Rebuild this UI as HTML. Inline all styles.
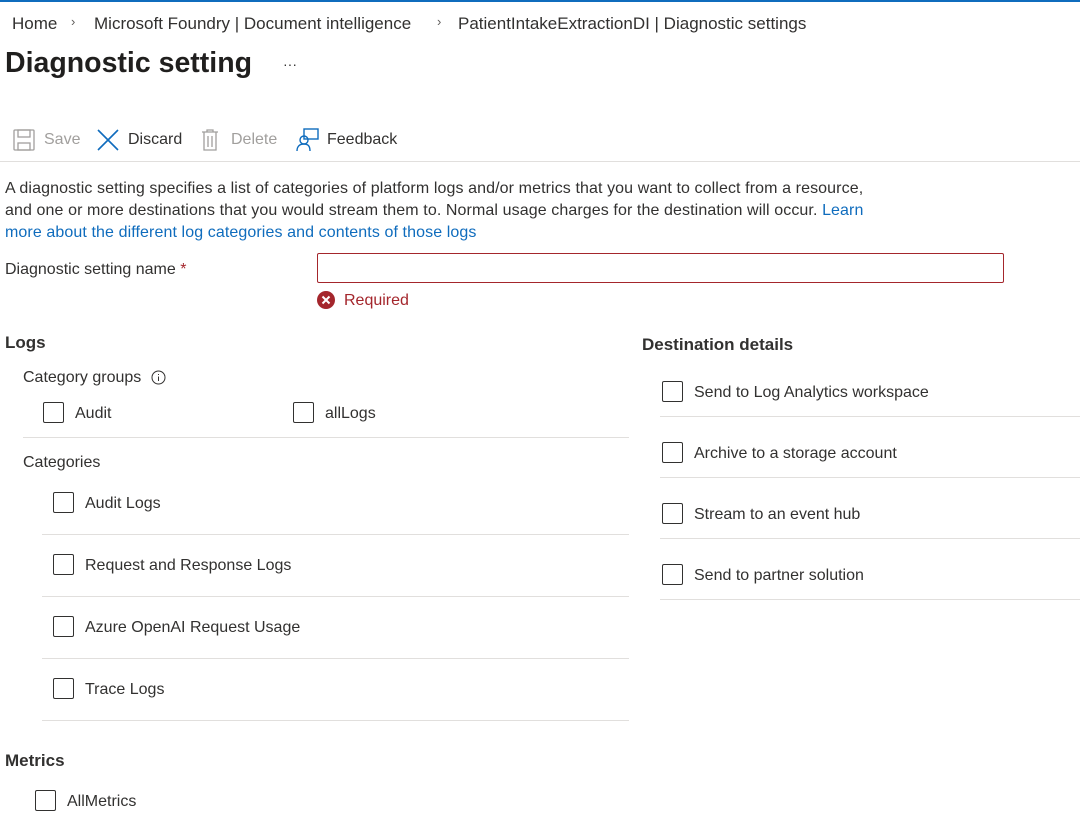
<!DOCTYPE html>
<html><head><meta charset="utf-8"><style>
*{margin:0;padding:0;box-sizing:border-box}
body{width:1080px;height:818px;overflow:hidden;background:#fff;font-family:"Liberation Sans",sans-serif;color:#323130;font-size:16px;position:relative}
.a{position:absolute;white-space:nowrap}
.cb{position:absolute;width:21px;height:21px;border:1px solid #323130;border-radius:2px;background:#fff}
.hr{position:absolute;height:1px;background:#e1dfdd}
.lnk{color:#0f6cbd}
</style></head><body>
<div class="a" style="left:0;top:0;width:1080px;height:2px;background:#0f6cbd"></div>
<div class="a" style="left:12px;top:14px;font-size:17px">Home</div>
<div class="a" style="left:71px;top:14px;font-size:13px;color:#605e5c">›</div>
<div class="a" style="left:94px;top:14px;font-size:17px">Microsoft Foundry | Document intelligence</div>
<div class="a" style="left:437px;top:14px;font-size:13px;color:#605e5c">›</div>
<div class="a" style="left:458px;top:14px;font-size:17px">PatientIntakeExtractionDI | Diagnostic settings</div>
<div class="a" style="left:5px;top:47px;font-size:28.5px;font-weight:bold;color:#201f1e">Diagnostic setting</div>
<div class="a" style="left:283px;top:56px;font-size:14px">···</div>
<svg class="a" style="left:13px;top:129px" width="22" height="22" viewBox="0 0 22 22" fill="none" stroke="#a19f9d" stroke-width="1.3"><rect x="1" y="1" width="20" height="20" rx="1"/><rect x="5" y="1" width="12" height="7"/><rect x="5" y="14" width="12" height="7"/></svg>
<div class="a" style="left:44px;top:131px;color:#a19f9d">Save</div>
<svg class="a" style="left:97px;top:129px" width="22" height="22" viewBox="0 0 22 22" stroke="#0f6cbd" stroke-width="1.6"><path d="M1 1L21 21M21 1L1 21"/></svg>
<div class="a" style="left:128px;top:131px">Discard</div>
<svg class="a" style="left:201px;top:129px" width="18" height="22" viewBox="0 0 18 22" fill="none" stroke="#a19f9d" stroke-width="1.3"><path d="M1 3H17M6 3V1H12V3M3 3V21H15V3M7 7V18M11 7V18"/></svg>
<div class="a" style="left:231px;top:131px;color:#a19f9d">Delete</div>
<svg class="a" style="left:296px;top:128px" width="24" height="24" viewBox="0 0 24 24" fill="none" stroke="#0f6cbd" stroke-width="1.4"><rect x="8" y="1" width="14" height="10"/><circle cx="8" cy="12" r="4"/><path d="M1 23C1 18 4 16 8 16C12 16 14 18 14 23"/></svg>
<div class="a" style="left:327px;top:131px">Feedback</div>
<div class="hr" style="left:0;top:161px;width:1080px"></div>
<div class="a" style="left:5px;top:178px;line-height:22px;font-size:16px;letter-spacing:0.1px">A diagnostic setting specifies a list of categories of platform logs and/or metrics that you want to collect from a resource,<br>and one or more destinations that you would stream them to. Normal usage charges for the destination will occur. <span class="lnk">Learn</span><br><span class="lnk">more about the different log categories and contents of those logs</span></div>
<div class="a" style="left:5px;top:261px">Diagnostic setting name <span style="color:#a4262c">*</span></div>
<div class="a" style="left:317px;top:253px;width:687px;height:30px;border:1px solid #a4262c;border-radius:2px"></div>
<svg class="a" style="left:317px;top:291px" width="18" height="18" viewBox="0 0 18 18"><circle cx="9" cy="9" r="9" fill="#a4262c"/><path d="M5.5 5.5L12.5 12.5M12.5 5.5L5.5 12.5" stroke="#fff" stroke-width="2"/></svg>
<div class="a" style="left:344px;top:292px;color:#a4262c">Required</div>
<div class="a" style="left:5px;top:333px;font-size:17px;font-weight:bold">Logs</div>
<div class="a" style="left:23px;top:369px">Category groups</div>
<svg class="a" style="left:151px;top:370px" width="15" height="15" viewBox="0 0 15 15" fill="none" stroke="#323130"><circle cx="7.5" cy="7.5" r="6.5"/><path d="M7.5 6.5V11M7.5 4V5"/></svg>
<div class="cb" style="left:43px;top:402px"></div><div class="a" style="left:75px;top:405px">Audit</div>
<div class="cb" style="left:293px;top:402px"></div><div class="a" style="left:325px;top:405px">allLogs</div>
<div class="hr" style="left:23px;top:437px;width:606px"></div>
<div class="a" style="left:23px;top:454px">Categories</div>
<div class="cb" style="left:53px;top:492px"></div><div class="a" style="left:85px;top:495px">Audit Logs</div>
<div class="hr" style="left:42px;top:534px;width:587px"></div>
<div class="cb" style="left:53px;top:554px"></div><div class="a" style="left:85px;top:557px">Request and Response Logs</div>
<div class="hr" style="left:42px;top:596px;width:587px"></div>
<div class="cb" style="left:53px;top:616px"></div><div class="a" style="left:85px;top:619px">Azure OpenAI Request Usage</div>
<div class="hr" style="left:42px;top:658px;width:587px"></div>
<div class="cb" style="left:53px;top:678px"></div><div class="a" style="left:85px;top:681px">Trace Logs</div>
<div class="hr" style="left:42px;top:720px;width:587px"></div>
<div class="a" style="left:5px;top:751px;font-size:17px;font-weight:bold">Metrics</div>
<div class="cb" style="left:35px;top:790px"></div><div class="a" style="left:67px;top:793px">AllMetrics</div>
<div class="a" style="left:642px;top:335px;font-size:17px;font-weight:bold">Destination details</div>
<div class="cb" style="left:662px;top:381px"></div><div class="a" style="left:694px;top:384px">Send to Log Analytics workspace</div>
<div class="hr" style="left:660px;top:416px;width:420px"></div>
<div class="cb" style="left:662px;top:442px"></div><div class="a" style="left:694px;top:445px">Archive to a storage account</div>
<div class="hr" style="left:660px;top:477px;width:420px"></div>
<div class="cb" style="left:662px;top:503px"></div><div class="a" style="left:694px;top:506px">Stream to an event hub</div>
<div class="hr" style="left:660px;top:538px;width:420px"></div>
<div class="cb" style="left:662px;top:564px"></div><div class="a" style="left:694px;top:567px">Send to partner solution</div>
<div class="hr" style="left:660px;top:599px;width:420px"></div>
</body></html>
